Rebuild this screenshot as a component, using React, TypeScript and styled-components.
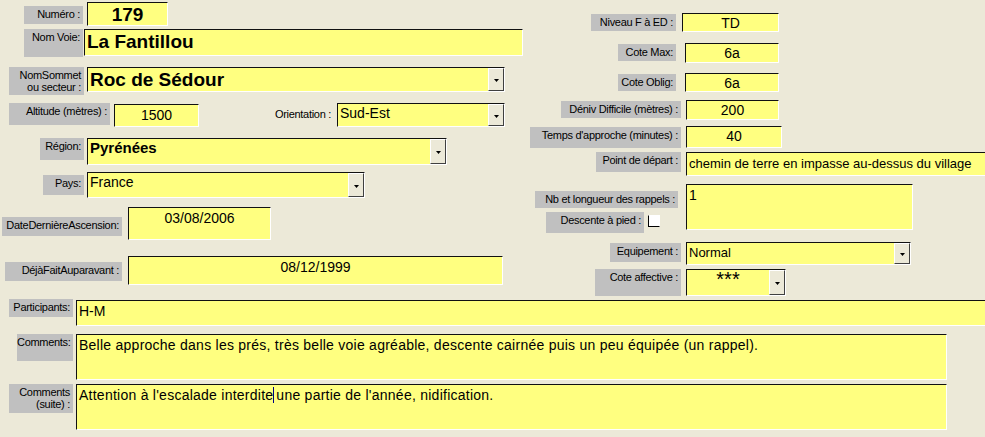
import React from "react";
import styled, { createGlobalStyle } from "styled-components";

const GlobalStyle = createGlobalStyle`
  html, body {
    margin: 0;
    padding: 0;
    background: #ece9d8;
    overflow: hidden;
  }
  * {
    box-sizing: border-box;
  }
`;

const Form = styled.div`
  width: 985px;
  height: 437px;
  overflow: hidden;
  background: #ece9d8;
  font-family: "Liberation Sans", Arial, sans-serif;
  color: #000;
`;

const Top = styled.div`
  display: flex;
  height: 293px;
`;

const Column = styled.div<{ $w: number }>`
  display: flex;
  flex-direction: column;
  width: ${(p) => p.$w}px;
  flex: none;
`;

const Row = styled.div<{ $mt: number; $pl: number }>`
  display: flex;
  align-items: flex-start;
  margin-top: ${(p) => p.$mt}px;
  padding-left: ${(p) => p.$pl}px;
  flex: none;
`;

const Label = styled.div<{ $w: number; $h: number; $dy?: number }>`
  flex: none;
  width: ${(p) => p.$w}px;
  height: ${(p) => p.$h}px;
  margin-top: ${(p) => p.$dy ?? 0}px;
  background: #c0c0c0;
  font-size: 11px;
  letter-spacing: -0.3px;
  line-height: 12px;
  text-align: right;
  padding: 2px 3px 0 0;
  white-space: nowrap;
`;

const PlainLabel = styled.div<{ $w: number; $ml: number; $dy: number }>`
  flex: none;
  width: ${(p) => p.$w}px;
  margin-left: ${(p) => p.$ml}px;
  margin-top: ${(p) => p.$dy}px;
  font-size: 11px;
  letter-spacing: -0.3px;
  line-height: 13px;
  text-align: right;
  white-space: nowrap;
`;

const Field = styled.div<{
  $w: number;
  $h: number;
  $ml: number;
  $dy?: number;
  $big?: boolean;
  $bold?: boolean;
}>`
  flex: none;
  display: flex;
  align-items: flex-start;
  width: ${(p) => p.$w}px;
  height: ${(p) => p.$h}px;
  margin-left: ${(p) => p.$ml}px;
  margin-top: ${(p) => p.$dy ?? 0}px;
  background: #ffff80;
  border-style: solid;
  border-width: 1px;
  border-color: #111 #fff #fff #111;
  overflow: hidden;
  font-size: ${(p) => (p.$big ? 19 : p.$bold ? 15 : 14)}px;
  font-weight: ${(p) => (p.$big || p.$bold ? 700 : 400)};
  line-height: ${(p) => (p.$big ? 21 : 16)}px;
`;

const Value = styled.div<{ $center?: boolean; $size?: number; $pt?: number }>`
  flex: 1;
  min-width: 0;
  padding: ${(p) => p.$pt ?? 1}px 2px 0 2px;
  text-align: ${(p) => (p.$center ? "center" : "left")};
  white-space: nowrap;
  ${(p) => (p.$size ? `font-size: ${p.$size}px;` : "")}
`;

const Multi = styled.div`
  flex: 1;
  padding: 2px 2px 0 2px;
  letter-spacing: 0.25px;
  white-space: pre-wrap;
`;

const DropButton = styled.div`
  flex: none;
  align-self: stretch;
  width: 16px;
  background: #ece9d8;
  border-style: solid;
  border-width: 1px;
  border-color: #fff #404040 #404040 #fff;
  display: flex;
  align-items: center;
  justify-content: center;
  padding-top: 2px;
`;

const Arrow = () => (
  <svg width="5" height="3" viewBox="0 0 5 3">
    <path d="M0 0h5L2.5 3z" fill="#000" />
  </svg>
);

const Group = styled.div<{ $w: number }>`
  display: flex;
  flex-direction: column;
  width: ${(p) => p.$w}px;
  flex: none;
`;

const SubRow = styled.div<{ $mt: number; $pl: number }>`
  display: flex;
  align-items: flex-start;
  margin-top: ${(p) => p.$mt}px;
  padding-left: ${(p) => p.$pl}px;
`;

const Check = styled.div`
  flex: none;
  width: 12px;
  height: 12px;
  margin: 3px 0 0 4px;
  background: #fff;
  border-style: solid;
  border-width: 1px;
  border-color: #fff #fff #000 #000;
`;

const Caret = styled.span`
  display: inline-block;
  width: 1px;
  height: 16px;
  background: #000080;
  vertical-align: -3px;
  margin-right: 2px;
`;

type ComboProps = {
  value: React.ReactNode;
  $w: number;
  $h: number;
  $ml: number;
  $dy?: number;
  $big?: boolean;
  $bold?: boolean;
  $center?: boolean;
  $size?: number;
  $pt?: number;
};

const Combo = ({ value, $center, $size, $pt, ...rest }: ComboProps) => (
  <Field {...rest}>
    <Value $center={$center} $size={$size} $pt={$pt}>
      {value}
    </Value>
    <DropButton>
      <Arrow />
    </DropButton>
  </Field>
);

export default function App() {
  return (
    <Form>
      <GlobalStyle />
      <Top>
        <Column $w={527}>
          <Row $mt={2} $pl={24}>
            <Label $w={59} $h={18} $dy={4}>Numéro :</Label>
            <Field $w={81} $h={24} $ml={4} $big>
              <Value $center>179</Value>
            </Field>
          </Row>
          <Row $mt={3} $pl={24}>
            <Label $w={59} $h={28}>Nom Voie:</Label>
            <Field $w={439} $h={27} $ml={1} $big>
              <Value>La Fantillou</Value>
            </Field>
          </Row>
          <Row $mt={10} $pl={9}>
            <Label $w={75} $h={28}>
              NomSommet
              <br />
              ou secteur :
            </Label>
            <Combo value="Roc de Sédour" $w={418} $h={25} $ml={3} $big />
          </Row>
          <Row $mt={8} $pl={9}>
            <Label $w={101} $h={22}>Altitude (mètres) :</Label>
            <Field $w={85} $h={23} $ml={4} $dy={1}>
              <Value $center $pt={2}>1500</Value>
            </Field>
            <PlainLabel $w={80} $ml={52} $dy={5}>Orientation :</PlainLabel>
            <Combo value="Sud-Est" $w={168} $h={24} $ml={6} />
          </Row>
          <Row $mt={11} $pl={40}>
            <Label $w={44} $h={22}>Région:</Label>
            <Combo value="Pyrénées" $w={360} $h={27} $ml={3} $bold />
          </Row>
          <Row $mt={7} $pl={43}>
            <Label $w={41} $h={20} $dy={3}>Pays:</Label>
            <Combo value="France" $w={278} $h={26} $ml={3} />
          </Row>
          <Row $mt={9} $pl={2}>
            <Label $w={120} $h={19} $dy={10}>DateDernièreAscension:</Label>
            <Field $w={143} $h={33} $ml={6}>
              <Value $center $pt={2}>03/08/2006</Value>
            </Field>
          </Row>
          <Row $mt={16} $pl={5}>
            <Label $w={117} $h={19} $dy={6}>DéjàFaitAuparavant :</Label>
            <Field $w={375} $h={29} $ml={6}>
              <Value $center $pt={2}>08/12/1999</Value>
            </Field>
          </Row>
        </Column>

        <Column $w={458}>
          <Row $mt={13} $pl={64}>
            <Label $w={85} $h={17} $dy={1}>Niveau F à ED :</Label>
            <Field $w={97} $h={19} $ml={6}>
              <Value $center>TD</Value>
            </Field>
          </Row>
          <Row $mt={11} $pl={91}>
            <Label $w={58} $h={17} $dy={1}>Cote Max:</Label>
            <Field $w={94} $h={20} $ml={9}>
              <Value $center>6a</Value>
            </Field>
          </Row>
          <Row $mt={10} $pl={91}>
            <Label $w={58} $h={17} $dy={1}>Cote Oblig:</Label>
            <Field $w={94} $h={19} $ml={9}>
              <Value $center>6a</Value>
            </Field>
          </Row>
          <Row $mt={8} $pl={34}>
            <Label $w={120} $h={17} $dy={1}>Déniv Difficile (mètres) :</Label>
            <Field $w={93} $h={20} $ml={5}>
              <Value $center>200</Value>
            </Field>
          </Row>
          <Row $mt={6} $pl={3}>
            <Label $w={151} $h={21} $dy={1}>Temps d'approche (minutes) :</Label>
            <Field $w={96} $h={22} $ml={5}>
              <Value $center>40</Value>
            </Field>
          </Row>
          <Row $mt={4} $pl={69}>
            <Label $w={85} $h={20}>Point de départ :</Label>
            <Field $w={310} $h={24} $ml={5}>
              <Value $size={13} $pt={3}>
                chemin de terre en impasse au-dessus du village
              </Value>
            </Field>
          </Row>
          <Row $mt={8} $pl={8}>
            <Group $w={146}>
              <SubRow $mt={7} $pl={0}>
                <Label $w={143} $h={17}>Nb et longueur des rappels :</Label>
              </SubRow>
              <SubRow $mt={4} $pl={11}>
                <Label $w={98} $h={21}>Descente à pied :</Label>
                <Check />
              </SubRow>
            </Group>
            <Field $w={227} $h={46} $ml={5}>
              <Multi>1</Multi>
            </Field>
          </Row>
          <Row $mt={9} $pl={83}>
            <Label $w={71} $h={19} $dy={1}>Equipement :</Label>
            <Combo value="Normal" $w={225} $h={23} $ml={5} $size={13} $pt={2} />
          </Row>
          <Row $mt={4} $pl={68}>
            <Label $w={86} $h={27}>Cote affective :</Label>
            <Combo value="***" $w={100} $h={27} $ml={5} $center $size={20} $pt={1} />
          </Row>
        </Column>
      </Top>

      <Row $mt={6} $pl={9}>
        <Label $w={64} $h={18}>Participants:</Label>
        <Field $w={920} $h={26} $ml={3} $dy={1}>
          <Value $pt={2}>H-M</Value>
        </Field>
      </Row>
      <Row $mt={8} $pl={17}>
        <Label $w={56} $h={27}>Comments:</Label>
        <Field $w={871} $h={46} $ml={3}>
          <Multi>
            Belle approche dans les prés, très belle voie agréable, descente
            cairnée puis un peu équipée (un rappel).
          </Multi>
        </Field>
      </Row>
      <Row $mt={4} $pl={9}>
        <Label $w={64} $h={29}>
          Comments
          <br />
          (suite) :
        </Label>
        <Field $w={871} $h={46} $ml={3}>
          <Multi>
            Attention à l'escalade interdite
            <Caret />
            une partie de l'année, nidification.
          </Multi>
        </Field>
      </Row>
    </Form>
  );
}
